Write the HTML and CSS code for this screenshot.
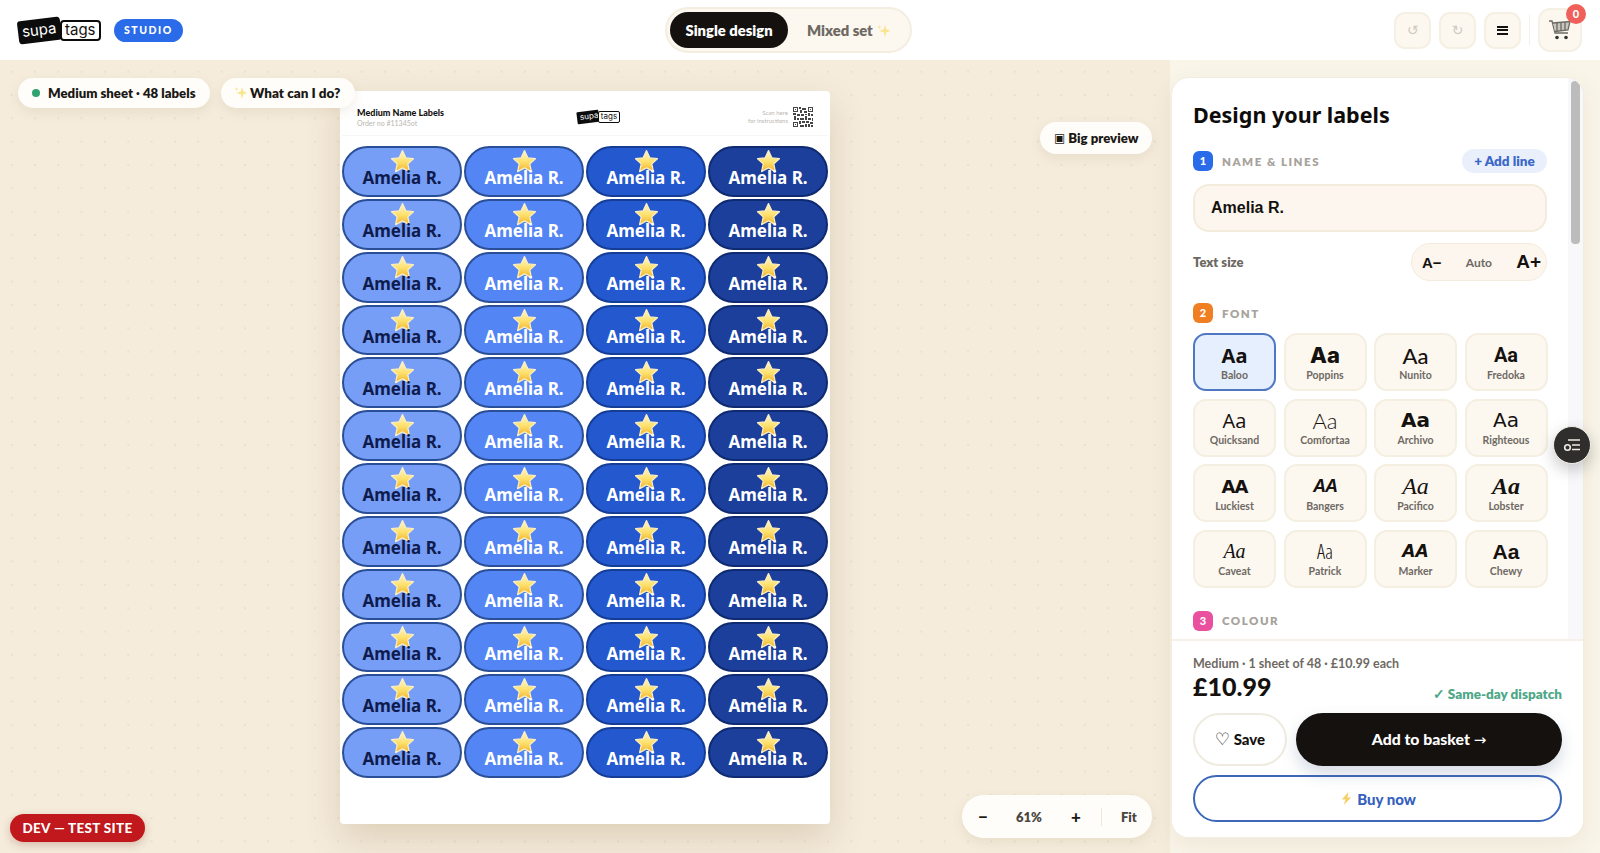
FILE: index.html
```html
<!DOCTYPE html>
<html lang="en">
<head>
    <meta charset="UTF-8">
    <title>Supatags Studio</title>
    <link rel="stylesheet" href="styles.css">
</head>
<body>
    <svg class="defs" aria-hidden="true">
        <defs>
            <linearGradient id="starFill" x1="0" y1="0" x2="0" y2="1">
                <stop offset="0" stop-color="#fff6cf"/>
                <stop offset="0.55" stop-color="#fde06a"/>
                <stop offset="1" stop-color="#f0b02c"/>
            </linearGradient>
            <symbol id="star" viewBox="0 0 24 24">
                <path d="M12 1.500l3.200 6.900 7.300.9-5.400 5 1.500 7.400L12 18.100l-6.600 3.600 1.500-7.400-5.400-5 7.300-.9z" fill="url(#starFill)" stroke="#fbeec2" stroke-width="1.200" stroke-linejoin="round"/>
            </symbol>
            <symbol id="sparkle" viewBox="0 0 16 16">
                <path d="M9 2l1.300 4.200L14.500 8l-4.200 1.300L9 14 7.700 9.300 3.500 8l4.200-1.800z" fill="#f8e68f"/>
                <path d="M3.500 2l.6 1.400 1.400.6-1.400.6-.6 1.400-.6-1.400L1.500 4l1.400-.6z" fill="#f8e68f"/>
            </symbol>
        </defs>
    </svg>

    <!-- Top bar -->
    <header class="topbar">
        <div class="brand">
            <div class="logo">
                <span class="logo-supa">supa</span><span class="logo-tags">tags</span>
            </div>
            <span class="studio-tag">STUDIO</span>
        </div>
        <div class="mode-switch">
            <button class="mode-btn active">Single design</button>
            <button class="mode-btn">Mixed set <svg class="spark"><use href="#sparkle"/></svg></button>
        </div>
        <div class="tools">
            <button class="tool-btn muted">↺</button>
            <button class="tool-btn muted">↻</button>
            <button class="tool-btn"><span class="burger"></span></button>
            <span class="tool-sep"></span>
            <button class="cart-btn">
                <svg width="24" height="24" viewBox="0 0 24 24" fill="none" stroke="#6d6a64" stroke-width="1.300">
                    <path d="M1 3h3l3 12h13"/>
                    <path d="M5 5l17-1.500-2 8.500-13 1.500" fill="#c9c6c0"/>
                    <path d="M9 5v8M13 4.500v8M17 4v8"/>
                    <circle cx="9" cy="19.500" r="1.800" fill="#333" stroke="none"/>
                    <circle cx="18" cy="19.500" r="1.800" fill="#333" stroke="none"/>
                </svg>
                <span class="cart-badge">0</span>
            </button>
        </div>
    </header>

    <div class="workspace">
        <!-- Canvas with the sheet -->
        <main class="canvas">
            <div class="float-pill status-pill"><span class="dot"></span>Medium sheet · 48 labels</div>
            <div class="float-pill help-pill"><svg class="spark"><use href="#sparkle"/></svg>What can I do?</div>
            <div class="float-pill preview-pill"><span class="preview-icon">▣</span>Big preview</div>

            <div class="sheet">
                <div class="sheet-head">
                    <div class="sheet-title">
                        <strong>Medium Name Labels</strong>
                        <span>Order no #11345ot</span>
                    </div>
                    <div class="logo logo-small">
                        <span class="logo-supa">supa</span><span class="logo-tags">tags</span>
                    </div>
                    <div class="sheet-qr">
                        <span class="qr-note">Scan here<br>for instructions</span>
                        <svg class="qr" viewBox="0 0 19 19" shape-rendering="crispEdges">
                            <path fill="#444" d="M0 0h5v5H0zM14 0h5v5h-5zM0 14h5v5H0zM6 0h2v2H6zM9 1h3v2H9zM7 3h2v3H7zM10 4h3v2h-3zM0 6h3v2H0zM4 7h3v2H4zM8 7h2v2H8zM11 7h2v1h-2zM14 6h2v3h-2zM17 7h2v2h-2zM1 9h2v3H1zM4 10h2v2H4zM7 10h3v2H7zM11 9h2v3h-2zM14 10h3v2h-3zM18 10h1v3h-1zM6 13h2v3H6zM9 13h2v2H9zM12 13h3v2h-3zM16 14h3v2h-3zM7 17h3v2H7zM11 16h2v3h-2zM14 16h2v3h-2zM17 17h2v2h-2z"/>
                            <path fill="#fff" d="M1 1h3v3H1zM15 1h3v3h-3zM1 15h3v3H1z"/>
                            <path fill="#444" d="M2 2h1v1H2zM16 2h1v1h-1zM2 16h1v1H2z"/>
                        </svg>
                    </div>
                </div>
                <div class="label-grid">
                    <div class="tag tag-a"><svg class="star"><use href="#star"/></svg><span>Amelia R.</span></div>
                    <div class="tag tag-b"><svg class="star"><use href="#star"/></svg><span>Amelia R.</span></div>
                    <div class="tag tag-c"><svg class="star"><use href="#star"/></svg><span>Amelia R.</span></div>
                    <div class="tag tag-d"><svg class="star"><use href="#star"/></svg><span>Amelia R.</span></div>
                    <div class="tag tag-a"><svg class="star"><use href="#star"/></svg><span>Amelia R.</span></div>
                    <div class="tag tag-b"><svg class="star"><use href="#star"/></svg><span>Amelia R.</span></div>
                    <div class="tag tag-c"><svg class="star"><use href="#star"/></svg><span>Amelia R.</span></div>
                    <div class="tag tag-d"><svg class="star"><use href="#star"/></svg><span>Amelia R.</span></div>
                    <div class="tag tag-a"><svg class="star"><use href="#star"/></svg><span>Amelia R.</span></div>
                    <div class="tag tag-b"><svg class="star"><use href="#star"/></svg><span>Amelia R.</span></div>
                    <div class="tag tag-c"><svg class="star"><use href="#star"/></svg><span>Amelia R.</span></div>
                    <div class="tag tag-d"><svg class="star"><use href="#star"/></svg><span>Amelia R.</span></div>
                    <div class="tag tag-a"><svg class="star"><use href="#star"/></svg><span>Amelia R.</span></div>
                    <div class="tag tag-b"><svg class="star"><use href="#star"/></svg><span>Amelia R.</span></div>
                    <div class="tag tag-c"><svg class="star"><use href="#star"/></svg><span>Amelia R.</span></div>
                    <div class="tag tag-d"><svg class="star"><use href="#star"/></svg><span>Amelia R.</span></div>
                    <div class="tag tag-a"><svg class="star"><use href="#star"/></svg><span>Amelia R.</span></div>
                    <div class="tag tag-b"><svg class="star"><use href="#star"/></svg><span>Amelia R.</span></div>
                    <div class="tag tag-c"><svg class="star"><use href="#star"/></svg><span>Amelia R.</span></div>
                    <div class="tag tag-d"><svg class="star"><use href="#star"/></svg><span>Amelia R.</span></div>
                    <div class="tag tag-a"><svg class="star"><use href="#star"/></svg><span>Amelia R.</span></div>
                    <div class="tag tag-b"><svg class="star"><use href="#star"/></svg><span>Amelia R.</span></div>
                    <div class="tag tag-c"><svg class="star"><use href="#star"/></svg><span>Amelia R.</span></div>
                    <div class="tag tag-d"><svg class="star"><use href="#star"/></svg><span>Amelia R.</span></div>
                    <div class="tag tag-a"><svg class="star"><use href="#star"/></svg><span>Amelia R.</span></div>
                    <div class="tag tag-b"><svg class="star"><use href="#star"/></svg><span>Amelia R.</span></div>
                    <div class="tag tag-c"><svg class="star"><use href="#star"/></svg><span>Amelia R.</span></div>
                    <div class="tag tag-d"><svg class="star"><use href="#star"/></svg><span>Amelia R.</span></div>
                    <div class="tag tag-a"><svg class="star"><use href="#star"/></svg><span>Amelia R.</span></div>
                    <div class="tag tag-b"><svg class="star"><use href="#star"/></svg><span>Amelia R.</span></div>
                    <div class="tag tag-c"><svg class="star"><use href="#star"/></svg><span>Amelia R.</span></div>
                    <div class="tag tag-d"><svg class="star"><use href="#star"/></svg><span>Amelia R.</span></div>
                    <div class="tag tag-a"><svg class="star"><use href="#star"/></svg><span>Amelia R.</span></div>
                    <div class="tag tag-b"><svg class="star"><use href="#star"/></svg><span>Amelia R.</span></div>
                    <div class="tag tag-c"><svg class="star"><use href="#star"/></svg><span>Amelia R.</span></div>
                    <div class="tag tag-d"><svg class="star"><use href="#star"/></svg><span>Amelia R.</span></div>
                    <div class="tag tag-a"><svg class="star"><use href="#star"/></svg><span>Amelia R.</span></div>
                    <div class="tag tag-b"><svg class="star"><use href="#star"/></svg><span>Amelia R.</span></div>
                    <div class="tag tag-c"><svg class="star"><use href="#star"/></svg><span>Amelia R.</span></div>
                    <div class="tag tag-d"><svg class="star"><use href="#star"/></svg><span>Amelia R.</span></div>
                    <div class="tag tag-a"><svg class="star"><use href="#star"/></svg><span>Amelia R.</span></div>
                    <div class="tag tag-b"><svg class="star"><use href="#star"/></svg><span>Amelia R.</span></div>
                    <div class="tag tag-c"><svg class="star"><use href="#star"/></svg><span>Amelia R.</span></div>
                    <div class="tag tag-d"><svg class="star"><use href="#star"/></svg><span>Amelia R.</span></div>
                    <div class="tag tag-a"><svg class="star"><use href="#star"/></svg><span>Amelia R.</span></div>
                    <div class="tag tag-b"><svg class="star"><use href="#star"/></svg><span>Amelia R.</span></div>
                    <div class="tag tag-c"><svg class="star"><use href="#star"/></svg><span>Amelia R.</span></div>
                    <div class="tag tag-d"><svg class="star"><use href="#star"/></svg><span>Amelia R.</span></div>
                </div>
            </div>

            <div class="dev-pill">DEV — TEST SITE</div>
            <div class="float-pill zoom-pill">
                <button class="zoom-btn">−</button>
                <span class="zoom-value">61%</span>
                <button class="zoom-btn">+</button>
                <span class="zoom-sep"></span>
                <span class="zoom-fit">Fit</span>
            </div>
        </main>

        <!-- Design panel -->
        <aside class="side">
            <div class="panel">
                <div class="panel-scroll">
                    <div class="panel-content">
                        <h1 class="panel-title">Design your labels</h1>

                        <div class="section-head">
                            <span class="step step-blue">1</span>
                            <span class="section-name">NAME &amp; LINES</span>
                            <button class="add-line">+ Add line</button>
                        </div>
                        <input class="name-input" type="text" value="Amelia R.">
                        <div class="size-row">
                            <span class="size-label">Text size</span>
                            <div class="size-control">
                                <span class="size-down">A−</span>
                                <span class="size-auto">Auto</span>
                                <span class="size-up">A+</span>
                            </div>
                        </div>

                        <div class="section-head section-font">
                            <span class="step step-orange">2</span>
                            <span class="section-name">FONT</span>
                        </div>
                        <div class="font-grid">
                            <button class="font-card selected"><span class="aa f-baloo">Aa</span><span class="font-name">Baloo</span></button>
                            <button class="font-card"><span class="aa f-poppins">Aa</span><span class="font-name">Poppins</span></button>
                            <button class="font-card"><span class="aa f-nunito">Aa</span><span class="font-name">Nunito</span></button>
                            <button class="font-card"><span class="aa f-fredoka">Aa</span><span class="font-name">Fredoka</span></button>
                            <button class="font-card"><span class="aa f-quicksand">Aa</span><span class="font-name">Quicksand</span></button>
                            <button class="font-card"><span class="aa f-comfortaa">Aa</span><span class="font-name">Comfortaa</span></button>
                            <button class="font-card"><span class="aa f-archivo">Aa</span><span class="font-name">Archivo</span></button>
                            <button class="font-card"><span class="aa f-righteous">Aa</span><span class="font-name">Righteous</span></button>
                            <button class="font-card"><span class="aa f-luckiest">AA</span><span class="font-name">Luckiest</span></button>
                            <button class="font-card"><span class="aa f-bangers">AA</span><span class="font-name">Bangers</span></button>
                            <button class="font-card"><span class="aa f-pacifico">Aa</span><span class="font-name">Pacifico</span></button>
                            <button class="font-card"><span class="aa f-lobster">Aa</span><span class="font-name">Lobster</span></button>
                            <button class="font-card"><span class="aa f-caveat">Aa</span><span class="font-name">Caveat</span></button>
                            <button class="font-card"><span class="aa f-patrick">Aa</span><span class="font-name">Patrick</span></button>
                            <button class="font-card"><span class="aa f-marker">AA</span><span class="font-name">Marker</span></button>
                            <button class="font-card"><span class="aa f-chewy">Aa</span><span class="font-name">Chewy</span></button>
                        </div>

                        <div class="section-head section-colour">
                            <span class="step step-pink">3</span>
                            <span class="section-name">COLOUR</span>
                        </div>
                    </div>
                    <div class="scroll-track"><div class="scroll-thumb"></div></div>
                </div>

                <div class="panel-foot">
                    <div class="price-row">
                        <div>
                            <div class="price-note">Medium · 1 sheet of 48 · £10.99 each</div>
                            <div class="price">£10.99</div>
                        </div>
                        <div class="dispatch">✓ Same-day dispatch</div>
                    </div>
                    <div class="buy-row">
                        <button class="save-btn"><span class="heart">♡</span> Save</button>
                        <button class="basket-btn">Add to basket <span class="arrow">→</span></button>
                    </div>
                    <button class="buy-btn">
                        <svg class="bolt" viewBox="0 0 16 16"><path d="M10 1L3 9h4l-2 6 8-8H9z" fill="#f6cf6a"/></svg>
                        Buy now
                    </button>
                </div>
            </div>
            <button class="round-btn">
                <svg width="20" height="20" viewBox="0 0 20 20" fill="none" stroke="#f0ece4" stroke-width="1.600">
                    <path d="M6 5h12M10 10h8M10 14.500h8"/>
                    <circle cx="5.500" cy="12.500" r="2.800"/>
                </svg>
            </button>
        </aside>
    </div>
</body>
</html>
```

FILE: styles.css
```css
* {
    margin: 0;
    padding: 0;
    box-sizing: border-box;
}

body {
    font-family: Lato, "Noto Sans", sans-serif;
    background: #f5ecdc;
    color: #14110f;
    height: 100vh;
    overflow: hidden;
    display: flex;
    flex-direction: column;
}

button {
    font-family: inherit;
    border: none;
    background: none;
    cursor: pointer;
    color: inherit;
}

.defs {
    position: absolute;
    width: 0;
    height: 0;
}

.spark {
    width: 16px;
    height: 16px;
    vertical-align: -3px;
    flex: none;
}

/* Top bar */
.topbar {
    height: 60px;
    flex: none;
    background: #fff;
    display: flex;
    justify-content: space-between;
    align-items: center;
    padding: 0 18px;
}

.brand {
    display: flex;
    align-items: center;
    gap: 13px;
    width: 165px;
}

.logo {
    display: flex;
    align-items: center;
    font-family: Inter, sans-serif;
    font-size: 15px;
}

.logo-supa {
    background: #0c0c0c;
    color: #fff;
    padding: 2px 3px 4px 4px;
    line-height: 17px;
    border-radius: 3px;
    transform: rotate(-7deg);
    width: 43px;
}

.logo-tags {
    border: 2px solid #0c0c0c;
    border-radius: 4px;
    background: #fff;
    line-height: 15px;
    padding: 0 3px 2px;
    margin-left: -1px;
    position: relative;
}

.logo-small {
    font-size: 8px;
}

.logo-small .logo-supa {
    width: 22px;
    padding: 1px 2px 2px 3px;
    line-height: 9px;
    border-radius: 1px;
}

.logo-small .logo-tags {
    border-width: 1px;
    border-radius: 2px;
    line-height: 9px;
    padding: 0 2px 1px;
}

.studio-tag {
    background: #2a6bea;
    color: #fff;
    font-size: 10.5px;
    font-weight: 900;
    letter-spacing: 1.5px;
    height: 23px;
    line-height: 23px;
    padding: 0 10.5px;
    border-radius: 12px;
}

.mode-switch {
    display: flex;
    align-items: center;
    gap: 4px;
    height: 46px;
    width: 247px;
    padding: 0 3px;
    background: #fcf7ef;
    border: 2px solid #f4eee1;
    border-radius: 23px;
}

.mode-btn {
    height: 36px;
    padding: 0 7px;
    border-radius: 18px;
    font-size: 14.8px;
    font-weight: 800;
    color: #6e6963;
    white-space: nowrap;
}

.mode-btn.active {
    background: #14110f;
    color: #fff;
    width: 118px;
    padding: 0;
    margin-right: 8px;
}

.tools {
    display: flex;
    align-items: center;
    justify-content: flex-end;
    gap: 8px;
}

.tool-btn {
    width: 37px;
    height: 37px;
    background: #fcf7ef;
    border: 2px solid #f6f0e4;
    border-radius: 11px;
    font-family: "DejaVu Sans", sans-serif;
    font-size: 14px;
    display: flex;
    align-items: center;
    justify-content: center;
}

.tool-btn.muted {
    color: #cfcac0;
}

.burger {
    width: 11px;
    height: 9px;
    border-top: 2px solid #111;
    border-bottom: 2px solid #111;
    position: relative;
}

.burger::after {
    content: "";
    position: absolute;
    left: 0;
    right: 0;
    top: 1.5px;
    height: 2px;
    background: #111;
}

.tool-sep {
    width: 1px;
    height: 30px;
    background: #f5f0e6;
}

.cart-btn {
    width: 44px;
    height: 44px;
    background: #fcf7ef;
    border: 2px solid #f6f0e4;
    border-radius: 12px;
    display: flex;
    align-items: center;
    justify-content: center;
    position: relative;
}

.cart-badge {
    position: absolute;
    top: -6px;
    right: -6px;
    width: 20px;
    height: 20px;
    border-radius: 50%;
    background: #f0605a;
    color: #fff;
    font-size: 11px;
    font-weight: 900;
    line-height: 20px;
    text-align: center;
}

/* Canvas */
.workspace {
    flex: 1;
    display: flex;
    min-height: 0;
}

.canvas {
    flex: 1;
    position: relative;
    display: flex;
    justify-content: center;
    padding-top: 31px;
    background-color: #f5ecdc;
    background-image: radial-gradient(circle, #ebe0cc 1px, transparent 1.5px);
    background-size: 23.33px 23.33px;
}

.float-pill {
    position: absolute;
    background: #fffdf9;
    border-radius: 16px;
    height: 30px;
    display: flex;
    align-items: center;
    padding: 0 14px 1px;
    font-size: 13.2px;
    font-weight: 800;
    color: #1b1815;
    white-space: nowrap;
    box-shadow: 0 4px 12px rgba(120, 90, 40, 0.1);
}

.status-pill {
    top: 18px;
    left: 18px;
    width: 192px;
}

.help-pill {
    top: 18px;
    left: 221px;
    width: 134px;
    padding: 0 12px 1px;
    font-size: 13.5px;
    z-index: 2;
}

.help-pill .spark {
    margin-right: 1px;
}

.dot {
    width: 8px;
    height: 8px;
    border-radius: 50%;
    background: #2ea36f;
    margin-right: 8px;
}

.preview-pill {
    top: 62px;
    left: 1040px;
    width: 112px;
    height: 32px;
    padding: 0 12px 1px 14px;
}

.preview-icon {
    font-family: "DejaVu Sans", sans-serif;
    font-size: 12px;
    margin-right: 3px;
}

.sheet {
    width: 490px;
    height: 733px;
    background: #fff;
    border-radius: 4px;
    box-shadow: 0 14px 36px rgba(110, 80, 30, 0.18);
    padding: 0 2px;
}

.sheet-head {
    height: 45px;
    display: flex;
    justify-content: space-between;
    align-items: center;
    padding: 8px 15px 0;
    border-bottom: 1px solid #f8f6f2;
}

.sheet-title {
    width: 92px;
}

.sheet-title strong {
    display: block;
    font-size: 9px;
    font-weight: 900;
    line-height: 12px;
    white-space: nowrap;
}

.sheet-title span {
    display: block;
    font-size: 7px;
    line-height: 9px;
    color: #b9b6b0;
}

.sheet-qr {
    display: flex;
    justify-content: flex-end;
    align-items: center;
    gap: 5px;
}

.qr-note {
    font-size: 6px;
    line-height: 8px;
    color: #b9b6b0;
    text-align: right;
}

.qr {
    width: 20px;
    height: 20px;
}

.label-grid {
    display: grid;
    grid-template-columns: repeat(4, 120px);
    grid-auto-rows: 50.85px;
    gap: 2px;
    margin-top: 10px;
}

.tag {
    border: 2px solid #2b4f96;
    border-radius: 26px;
    display: flex;
    flex-direction: column;
    align-items: center;
    padding-top: 1px;
    font-family: "Noto Sans", sans-serif;
    font-size: 17px;
    font-weight: 700;
    color: #fff;
}

.tag span {
    line-height: 20px;
    margin-top: -6px;
    position: relative;
}

.star {
    width: 25px;
    height: 25px;
    flex: none;
}

.tag-a {
    background: #769ef6;
    color: #0f1b4d;
}

.tag-b {
    background: #5485f4;
}

.tag-c {
    background: #2358cf;
    border-color: #163d96;
}

.tag-d {
    background: #1b3f9a;
    border-color: #0f2a70;
}

.dev-pill {
    position: absolute;
    left: 10px;
    bottom: 11px;
    height: 28px;
    width: 135px;
    border-radius: 14px;
    background: #c0181c;
    color: #fff;
    font-size: 13.5px;
    font-weight: 900;
    letter-spacing: 0.3px;
    line-height: 28px;
    text-align: center;
    white-space: nowrap;
    box-shadow: 0 3px 8px rgba(120, 40, 20, 0.25);
}

.zoom-pill {
    left: 962px;
    bottom: 15px;
    width: 190px;
    height: 43px;
    border-radius: 22px;
    padding: 0 14px;
    font-size: 13px;
    color: #4a4641;
}

.zoom-btn {
    font-size: 17px;
    font-weight: 900;
    color: #1b1815;
    width: 14px;
}

.zoom-value {
    margin: 0 27px 0 26px;
}

.zoom-sep {
    width: 1px;
    height: 18px;
    background: #eee8dc;
    margin: 0 19px 0 18px;
}

/* Design panel */
.side {
    width: 430px;
    flex: none;
    position: relative;
    background: #f9f5e9;
    padding: 17px 16px 15px 1px;
}

.panel {
    height: 100%;
    background: #fff;
    border: 1px solid #f3ede0;
    border-radius: 18px;
    overflow: hidden;
    display: flex;
    flex-direction: column;
    box-shadow: 0 8px 24px rgba(110, 80, 30, 0.08);
}

.panel-scroll {
    flex: 1;
    min-height: 0;
    overflow: hidden;
    display: flex;
}

.scroll-track {
    width: 15px;
    flex: none;
    background: #f8f8fb;
    padding: 3px 3px 0;
}

.scroll-thumb {
    height: 163px;
    background: #bcbcbc;
    border-radius: 4px;
}

.panel-content {
    flex: 1;
    min-width: 0;
    padding: 22px 21px 0;
}

.panel-title {
    font-family: "Noto Sans", sans-serif;
    font-size: 21.5px;
    font-weight: 700;
    line-height: 30px;
    color: #0e0c0b;
}

.section-head {
    display: flex;
    align-items: center;
    margin-top: 19px;
    height: 24px;
}

.section-font {
    margin-top: 20px;
}

.section-colour {
    margin-top: 21px;
}

.step {
    width: 20px;
    height: 20px;
    border-radius: 6px;
    color: #fff;
    font-size: 11px;
    font-weight: 900;
    line-height: 20px;
    text-align: center;
    margin-right: 9px;
}

.step-blue {
    background: #2a6bea;
}

.step-orange {
    background: #f07f24;
}

.step-pink {
    background: #e9519f;
}

.section-name {
    font-size: 11.5px;
    font-weight: 800;
    letter-spacing: 1.5px;
    color: #a7a39c;
}

.add-line {
    margin-left: auto;
    height: 24px;
    width: 85px;
    border-radius: 12px;
    background: #eaf0fb;
    color: #3d68c8;
    font-size: 13.5px;
    font-weight: 800;
}

.name-input {
    display: block;
    width: 100%;
    height: 48px;
    margin-top: 11px;
    padding: 0 16px;
    background: #fcf6ee;
    border: 2px solid #f3ebdc;
    border-radius: 16px;
    font-family: "Liberation Sans", sans-serif;
    font-size: 16px;
    font-weight: 700;
    color: #14110f;
    outline: none;
}

.size-row {
    display: flex;
    justify-content: space-between;
    align-items: center;
    margin-top: 11px;
}

.size-label {
    font-size: 13px;
    font-weight: 800;
    color: #6e6963;
}

.size-control {
    width: 136px;
    height: 38px;
    background: #fcf6ee;
    border: 1px solid #f3ebdc;
    border-radius: 19px;
    display: flex;
    justify-content: space-between;
    align-items: center;
    padding: 0 5px 0 10px;
    font-family: "Liberation Sans", sans-serif;
    font-weight: 700;
}

.size-down {
    font-size: 15px;
}

.size-auto {
    font-family: Lato, sans-serif;
    font-size: 12px;
    color: #6e6963;
}

.size-up {
    font-size: 19px;
}

.font-grid {
    display: grid;
    grid-template-columns: repeat(4, 83px);
    grid-auto-rows: 58px;
    column-gap: 7.5px;
    row-gap: 7.5px;
    margin-top: 8px;
}

.font-card {
    background: #fcf7ef;
    border: 2px solid #f5efe2;
    border-radius: 13px;
    display: flex;
    flex-direction: column;
    align-items: center;
    justify-content: center;
}

.font-card.selected {
    background: #e6effd;
    border-color: #4f77c4;
}

.aa {
    font-size: 20px;
    line-height: 25px;
    height: 25px;
    color: #14110f;
}

.font-name {
    font-size: 10.5px;
    font-weight: 700;
    line-height: 14px;
    color: #6e6963;
}

.f-baloo { font-family: "Noto Sans", sans-serif; font-weight: 700; }
.f-poppins { font-family: Inter, sans-serif; font-weight: 800; font-size: 22px; }
.f-nunito { font-family: Lato, sans-serif; font-weight: 500; font-size: 22px; }
.f-fredoka { font-family: Roboto, sans-serif; font-weight: 700; }
.f-quicksand { font-family: "Open Sans", sans-serif; font-weight: 400; }
.f-comfortaa { font-family: Lato, sans-serif; font-weight: 300; font-size: 22px; }
.f-archivo { font-family: "DejaVu Sans", sans-serif; font-weight: 700; }
.f-righteous { font-family: "DejaVu Sans", sans-serif; font-weight: 400; }
.f-luckiest { font-family: "DejaVu Sans", sans-serif; font-weight: 700; font-size: 18px; letter-spacing: -1px; }
.f-bangers { font-family: "Liberation Sans", sans-serif; font-weight: 700; font-style: italic; font-size: 18px; letter-spacing: -1px; }
.f-pacifico { font-family: "Liberation Serif", serif; font-style: italic; font-size: 24px; }
.f-lobster { font-family: "Liberation Serif", serif; font-weight: 700; font-style: italic; font-size: 24px; }
.f-caveat { font-family: "Liberation Serif", serif; font-style: italic; }
.f-patrick { font-family: "Open Sans", sans-serif; font-weight: 300; font-stretch: condensed; }
.f-marker { font-family: "DejaVu Sans", sans-serif; font-weight: 700; font-style: italic; font-size: 17px; }
.f-chewy { font-family: "Liberation Sans", sans-serif; font-weight: 700; font-size: 21px; }

/* Footer of the panel */
.panel-foot {
    flex: none;
    border-top: 2px solid #f5f1e8;
    padding: 15px 21px 15px;
    background: #fff;
}

.price-row {
    display: flex;
    justify-content: space-between;
    align-items: flex-end;
}

.price-note {
    font-size: 12.5px;
    font-weight: 700;
    line-height: 15px;
    color: #6e6963;
}

.price {
    font-size: 25px;
    font-weight: 900;
    line-height: 31px;
    color: #14110f;
}

.dispatch {
    font-size: 13.5px;
    font-weight: 800;
    color: #4ea888;
    line-height: 22px;
    margin-bottom: -3px;
}

.buy-row {
    display: flex;
    gap: 9px;
    margin-top: 11px;
}

.save-btn {
    width: 94px;
    height: 53px;
    padding-bottom: 1px;
    border: 2px solid #f0ebe0;
    border-radius: 27px;
    font-size: 15px;
    font-weight: 900;
}

.heart {
    font-family: "DejaVu Sans", sans-serif;
    font-weight: 400;
    font-size: 17px;
}

.basket-btn {
    flex: 1;
    height: 53px;
    padding-bottom: 1px;
    border-radius: 27px;
    background: #14110f;
    color: #fff;
    font-size: 15.8px;
    font-weight: 900;
    box-shadow: 0 8px 16px rgba(70, 90, 130, 0.22);
}

.arrow {
    font-family: "DejaVu Sans", sans-serif;
    font-size: 15px;
    font-weight: 400;
}

.buy-btn {
    display: flex;
    align-items: center;
    justify-content: center;
    gap: 3px;
    width: 100%;
    height: 47px;
    margin-top: 9px;
    border: 2px solid #3d68b8;
    border-radius: 24px;
    background: #fff;
    color: #3560bd;
    font-size: 15px;
    font-weight: 900;
}

.bolt {
    width: 15px;
    height: 15px;
}

.round-btn {
    position: absolute;
    left: 383px;
    top: 366px;
    width: 38px;
    height: 38px;
    border-radius: 50%;
    background: #2f2e2c;
    border: 1px solid #f2efe8;
    display: flex;
    align-items: center;
    justify-content: center;
    box-shadow: 0 6px 16px rgba(0, 0, 0, 0.22);
}
```
